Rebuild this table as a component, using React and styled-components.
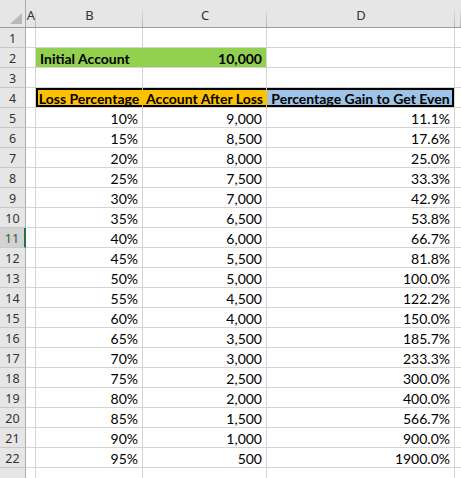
import styled, { createGlobalStyle } from 'styled-components';

const GlobalStyle = createGlobalStyle`
  html, body {
    margin: 0;
    padding: 0;
    background: #ffffff;
    overflow: hidden;
  }
`;

const COLS = ['A', 'B', 'C', 'D', ''];
const GRID = '#d4d4d4';
const HEAD_BG = '#e6e6e6';

const Sheet = styled.div`
  display: grid;
  grid-template-columns: 26px 10px 107px 124px 188px 6px;
  grid-template-rows: 28px;
  grid-auto-rows: 20px;
  width: 461px;
  height: 478px;
  overflow: hidden;
  font-family: Lato, "Liberation Sans", sans-serif;
  font-size: 14px;
  color: #000;
`;

const Corner = styled.div`
  background: ${HEAD_BG};
  border-right: 1px solid #ababab;
  border-bottom: 1px solid #9b9b9b;
  box-sizing: border-box;
  display: flex;
  align-items: flex-end;
  justify-content: flex-end;
  padding: 0 3px 3px 0;
`;

const ColHead = styled.div`
  position: relative;
  background: ${HEAD_BG};
  border-bottom: 1px solid #9b9b9b;
  box-sizing: border-box;
  display: flex;
  align-items: flex-end;
  justify-content: center;
  padding-bottom: 4px;
  font-family: "Noto Sans", "Open Sans", sans-serif;
  font-size: 13px;
  color: #333;
  line-height: 15px;

  &::after {
    content: '';
    position: absolute;
    right: 0;
    top: 9px;
    bottom: 0;
    width: 1px;
    background: linear-gradient(#e0e0e0, #b4b4b4);
  }
`;

const RowHead = styled.div`
  background: ${({ $active }) => ($active ? '#d2d2d2' : HEAD_BG)};
  border-right: ${({ $active }) => ($active ? '2px solid #217346' : '1px solid #ababab')};
  border-bottom: 1px solid #c8c8c8;
  box-sizing: border-box;
  display: flex;
  align-items: center;
  justify-content: center;
  font-family: "Noto Sans", "Open Sans", sans-serif;
  font-size: 12.5px;
  color: ${({ $active }) => ($active ? '#2d5e3e' : '#333')};
  padding-top: 1px;
`;

const Cell = styled.div`
  box-sizing: border-box;
  background: ${({ $fill }) => $fill || '#fff'};
  border-right: 1px solid ${({ $fill, $joinRight }) => ($joinRight && $fill ? $fill : GRID)};
  border-bottom: 1px solid ${GRID};
  display: flex;
  align-items: center;
  justify-content: ${({ $align }) => $align || 'flex-end'};
  padding: 1px 4px 0 4px;
  font-weight: ${({ $bold }) => ($bold ? 700 : 400)};
  white-space: nowrap;
  box-shadow: ${({ $box }) => $box || 'none'};
`;

const Triangle = () => (
  <svg width="12" height="11" viewBox="0 0 12 11">
    <polygon points="12,0 12,11 0,11" fill="#b8b8b8" />
  </svg>
);

const rows = [];
for (let p = 10; p <= 95; p += 5) {
  const acct = 100 * (100 - p);
  const gain = (p * 100) / (100 - p);
  rows.push({ p: `${p}%`, acct: acct.toLocaleString('en-US'), gain: `${gain.toFixed(1)}%` });
}

const T = 'inset 0 2px 0 #000, inset 0 -2px 0 #000';

const App = () => {
  const lines = [];

  const empty = (r) => [
    <Cell key={`${r}a`} />,
    <Cell key={`${r}b`} />,
    <Cell key={`${r}c`} />,
    <Cell key={`${r}d`} />,
    <Cell key={`${r}e`} />,
  ];

  lines.push(<RowHead key="h1">1</RowHead>, ...empty(1));

  lines.push(
    <RowHead key="h2">2</RowHead>,
    <Cell key="2a" />,
    <Cell key="2b" $fill="#92d050" $joinRight $bold $align="flex-start">Initial Account</Cell>,
    <Cell key="2c" $fill="#92d050" $bold>10,000</Cell>,
    <Cell key="2d" />,
    <Cell key="2e" />
  );

  lines.push(<RowHead key="h3">3</RowHead>, ...empty(3));

  lines.push(
    <RowHead key="h4">4</RowHead>,
    <Cell key="4a" />,
    <Cell key="4b" $fill="#ffc000" $joinRight $bold $align="center" $box={`${T}, inset 2px 0 0 #000`}>
      Loss Percentage
    </Cell>,
    <Cell key="4c" $fill="#ffc000" $joinRight $bold $align="center" $box={T}>
      Account After Loss
    </Cell>,
    <Cell key="4d" $fill="#9dc3e6" $bold $align="center" $box={`${T}, inset -2px 0 0 #000`}>
      Percentage Gain to Get Even
    </Cell>,
    <Cell key="4e" />
  );

  rows.forEach((row, i) => {
    const r = i + 5;
    lines.push(
      <RowHead key={`h${r}`} $active={r === 11}>{r}</RowHead>,
      <Cell key={`${r}a`} />,
      <Cell key={`${r}b`}>{row.p}</Cell>,
      <Cell key={`${r}c`}>{row.acct}</Cell>,
      <Cell key={`${r}d`}>{row.gain}</Cell>,
      <Cell key={`${r}e`} />
    );
  });

  lines.push(<RowHead key="h23" />, ...empty(23));

  return (
    <>
      <GlobalStyle />
      <Sheet>
        <Corner>
          <Triangle />
        </Corner>
        {COLS.map((c, i) => (
          <ColHead key={i}>{c}</ColHead>
        ))}
        {lines}
      </Sheet>
    </>
  );
};

export default App;
